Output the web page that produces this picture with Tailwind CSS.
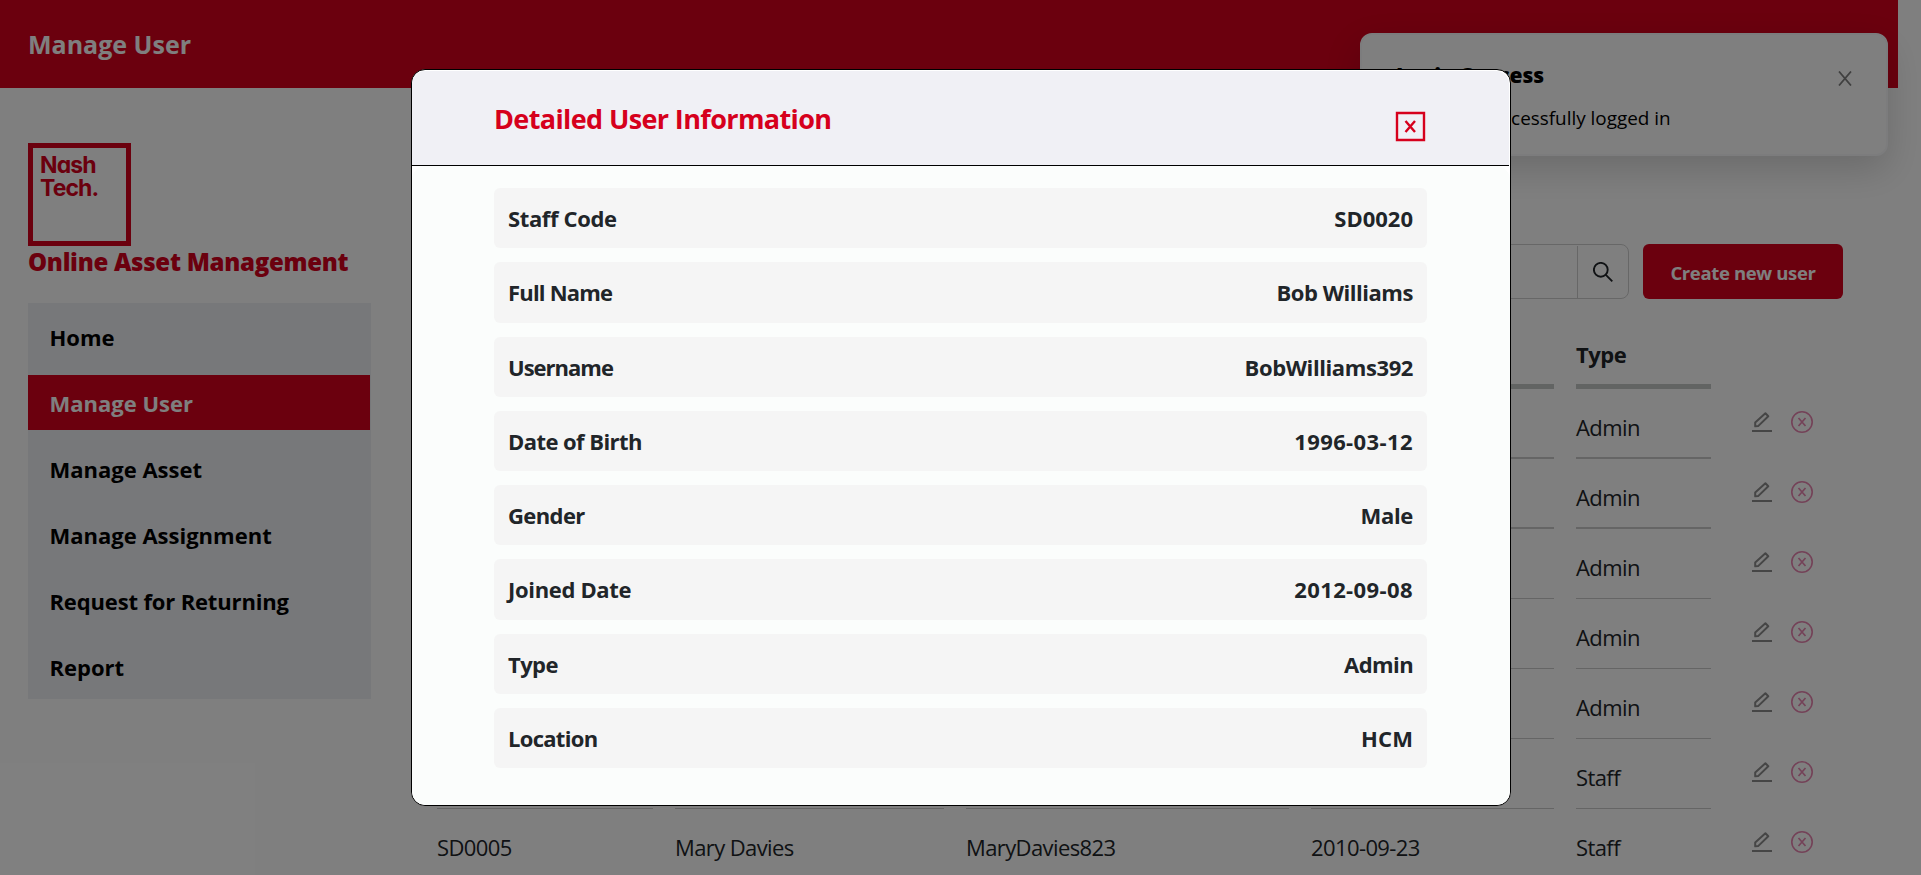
<!DOCTYPE html>
<html lang="en">
<head>
<meta charset="utf-8">
<title>Manage User</title>
<script src="https://cdn.jsdelivr.net/npm/@tailwindcss/browser@4"></script>
</head>
<body class="relative h-[875px] overflow-hidden bg-white font-['Open_Sans','Noto_Sans',sans-serif] text-black">
<svg class="hidden">
  <symbol id="pencil" viewBox="0 0 22 22"><path d="M4.200 15.300v-3.800L14.400 2.300l2.900 2.900L7.400 14.900z" fill="none" stroke="currentColor" stroke-width="2" stroke-linejoin="round"/><path d="M1 20h20" stroke="currentColor" stroke-width="2"/></symbol>
  <symbol id="remove" viewBox="0 0 22 22"><circle cx="11" cy="11" r="10.200" fill="none" stroke="currentColor" stroke-width="1.600"/><path d="M7.500 7l7 8M14.500 7l-7 8" stroke="currentColor" stroke-width="1.700"/></symbol>
</svg>

<header class="flex h-[88px] w-[1898px] items-center bg-[#d6001c] pl-7"><h1 class="text-[25px]/[34px] font-bold text-white">Manage User</h1></header>

<div class="flex">
  <aside class="ml-7 w-[343px] pt-[55px]">
    <div class="flex size-[103px] flex-col border-5 border-[#d6001c] pt-1.5 pl-[7px] font-[Inter,sans-serif] text-[23px]/[23px] font-bold tracking-[-0.9px] text-[#d6001c] [font-feature-settings:'cv11']"><span>Nash</span><span>Tech.</span></div>
    <p class="h-[57px] text-[24px]/[31px] font-extrabold tracking-[-0.280px] whitespace-nowrap text-[#d6001c]">Online Asset Management</p>
    <nav class="flex h-[396px] flex-col gap-[11px] bg-[#eff1f5] pt-1.5 text-[22px]/[57px] font-bold">
      <a class="h-[55px] pl-[21.500px]">Home</a>
      <a class="mr-px h-[55px] bg-[#d6001c] pl-[21.500px] text-white">Manage User</a>
      <a class="h-[55px] pl-[21.500px]">Manage Asset</a>
      <a class="h-[55px] pl-[21.500px]">Manage Assignment</a>
      <a class="h-[55px] pl-[21.500px] tracking-[-0.150px]">Request for Returning</a>
      <a class="h-[55px] pl-[21.500px]">Report</a>
    </nav>
  </aside>
  <main class="ml-[66px] w-[1406px] pt-[156px]">
    <div class="flex h-[55px] justify-end gap-3.5">
      <div class="flex w-[330px] rounded-lg border border-[#cfcfcf]">
        <div class="mt-px flex-1 border-r border-[#cfcfcf]"></div>
        <div class="flex w-[50px] items-center justify-center"><svg class="size-5" viewBox="0 0 20 20" fill="none" stroke="#212529" stroke-width="1.900"><circle cx="7.800" cy="7.800" r="6.900"/><path d="M12.600 12.600l6.700 6.700"/></svg></div>
      </div>
      <button class="w-[200px] rounded-md bg-[#d6001c] pt-0.5 text-[18.500px] font-bold tracking-[-0.350px] text-white">Create new user</button>
    </div>
    <div id="table" class="flex flex-col text-[22px] text-[#212529]"></div>
  </main>
</div>

<section class="absolute top-[33px] left-[1360px] h-[123px] w-[528px] rounded-xl border-2 border-[#f8f9fb] bg-white pt-[23px] pl-[34px] shadow-[0_14px_36px_rgba(0,0,0,0.16)]">
  <h2 class="text-[21px]/[34px] font-extrabold">Login Success</h2>
  <p class="mt-[10px] text-[18.900px]/[32px]">You have successfully logged in</p>
  <svg class="absolute top-[36px] left-[476px] h-[15px] w-[14px]" viewBox="0 0 14 15" stroke="#808080" stroke-width="1.800"><path d="M1 .5l12 14M13 .5L1 14.500"/></svg>
</section>

<div class="absolute inset-0 bg-black/50"></div>

<section class="absolute top-[69px] left-[411px] flex h-[737px] w-[1100px] flex-col overflow-hidden rounded-[14px] border border-black bg-white">
  <header class="mt-px mr-px flex h-[95px] shrink-0 justify-between rounded-t-[13px] border-b border-black bg-[#f0f0f5] px-[82px]">
    <h2 class="pt-[30px] text-[27px]/[36px] font-bold tracking-[-0.620px] text-[#d6001c]">Detailed User Information</h2>
    <svg class="mt-[40px] mr-px size-[31px]" viewBox="0 0 31 31" fill="none" stroke="#d6001c" stroke-width="2.400"><path d="M2 2h27v27H2z"/><path d="M10.500 10l9.500 11M20 10l-9.500 11"/></svg>
  </header>
  <dl id="details" class="flex flex-1 flex-col gap-3.5 rounded-[14px] bg-[#fbfdfc] pr-[83px] pl-[82px] pt-[22px] text-[22px] font-bold text-[#212529]"></dl>
</section>

<script>
const people = [
  ["","","","","Admin"],
  ["","","","","Admin"],
  ["","","","","Admin"],
  ["","","","","Admin"],
  ["","","","","Admin"],
  ["","","","","Staff"],
  ["SD0005","Mary Davies","MaryDavies823","2010-09-23","Staff"]
];
const grid = "grid grid-cols-[216px_269px_323px_243px_135px_110px] gap-x-[22px]";
document.getElementById("table").innerHTML =
  `<div class="${grid} h-[90px] font-bold">` + ["Staff Code","Full Name","Username","Joined Date","Type"].map(t => `<div class="border-b-5 border-[#c4c8c7] pt-[38px] leading-[34px] tracking-[-0.500px]">${t}</div>`).join("") + `</div>` +
  people.map((p, i) => `<div class="${grid} h-[70px] tracking-[-0.600px]">` + p.map(t => `<div class="${i < 2 ? "border-b-2" : "border-b"} border-[#cbcbcb] pt-[21px] leading-[34px]">${t}</div>`).join("") +
  `<div class="flex gap-[18px] pt-[22px] pl-[18px]"><svg class="size-[22px] text-[#8c8c8c]"><use href="#pencil"/></svg><svg class="size-[22px] text-[#e884b0]"><use href="#remove"/></svg></div></div>`).join("");
const details = [
  ["Staff Code", "tracking-[-0.370px]", "SD0020", "tracking-[0px]"],
  ["Full Name", "tracking-[-0.800px]", "Bob Williams", "tracking-[-0.450px]"],
  ["Username", "tracking-[-1px]", "BobWilliams392", "tracking-[-0.400px]"],
  ["Date of Birth", "tracking-[-0.560px]", "1996-03-12", "tracking-[0.400px]"],
  ["Gender", "tracking-[-0.600px]", "Male", "tracking-[-0.300px]"],
  ["Joined Date", "tracking-[-0.330px]", "2012-09-08", "tracking-[0.400px]"],
  ["Type", "tracking-[-0.600px]", "Admin", "tracking-[-0.600px]"],
  ["Location", "tracking-[-0.700px]", "HCM", "tracking-[0.100px]"]
];
document.getElementById("details").innerHTML = details
  .map(([a, ta, b, tb]) => `<div class="flex h-[60.300px] shrink-0 justify-between rounded-md bg-[#f5f5f5] px-3.5 leading-[61px]"><dt class="${ta}">${a}</dt><dd class="${tb}">${b}</dd></div>`).join("");
</script>
</body>
</html>
